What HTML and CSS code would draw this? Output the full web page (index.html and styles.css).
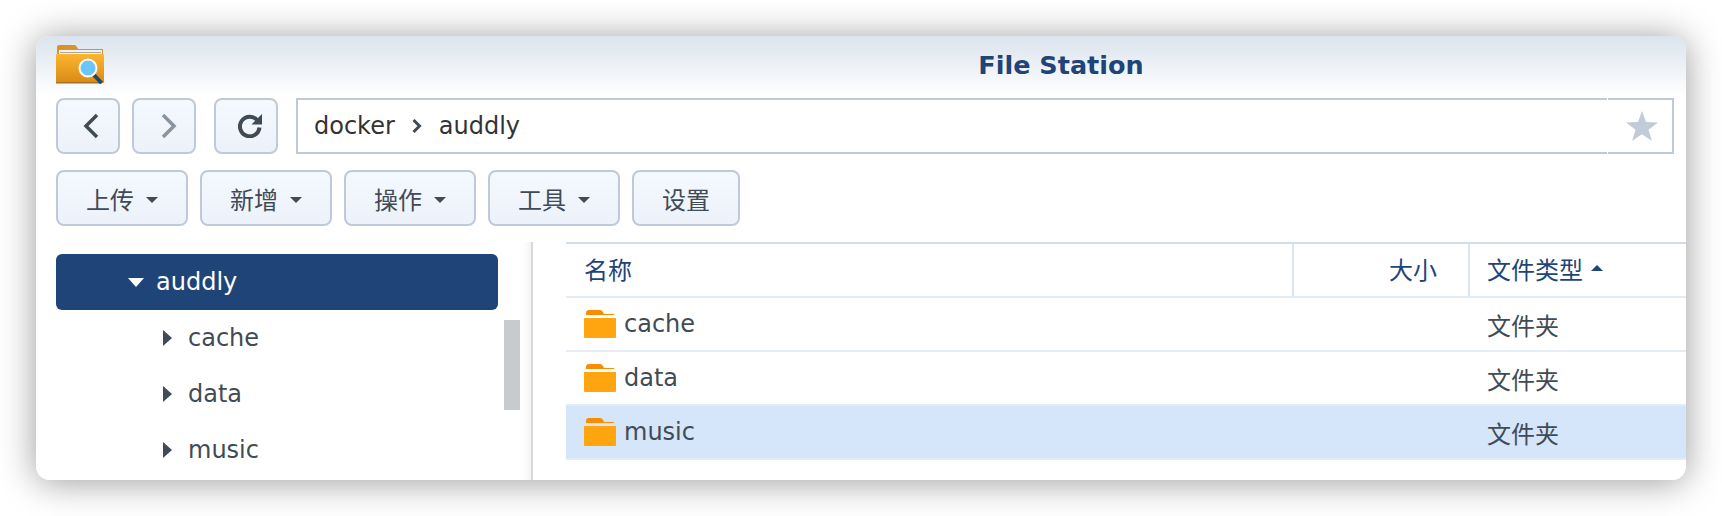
FILE: index.html
```html
<!DOCTYPE html>
<html lang="en">
<head>
    <meta charset="UTF-8">
    <meta name="viewport" content="width=device-width, initial-scale=1.0">
    <title>File Station</title>
    <link rel="stylesheet" href="styles.css">
</head>
<body>
    <div class="window">
        <div class="titlebar">
            <svg class="logo" width="48" height="42" viewBox="0 0 48 42">
                <defs>
                    <linearGradient id="folderFront" x1="0" y1="0" x2="0" y2="1">
                        <stop offset="0" stop-color="#fdb52f"/>
                        <stop offset="1" stop-color="#d88a16"/>
                    </linearGradient>
                </defs>
                <path d="M1 3 Q1 1 3 1 H18 Q20 1 21 3 L22 5 H47 V14 H1 Z" fill="#d9932a"/>
                <rect x="3" y="6" width="43" height="6" fill="#f1f1ee"/>
                <rect x="4" y="8" width="41" height="1" fill="#a9a9a4"/>
                <rect x="0" y="10" width="48" height="29" rx="1" fill="url(#folderFront)"/>
                <rect x="0" y="38" width="46" height="1.5" fill="#a8701c"/>
                <line x1="38" y1="31" x2="45.500" y2="39" stroke="#174a78" stroke-width="4"/>
                <circle cx="32" cy="24" r="8.500" fill="#6cc5fc" stroke="#fbfbf6" stroke-width="2"/>
            </svg>
            <div class="title">File Station</div>
        </div>

        <div class="navbar">
            <button class="btn btn-nav btn-back">
                <svg width="16" height="26" viewBox="0 0 16 26"><path d="M14 2 L3 13 L14 24" fill="none" stroke="#414b55" stroke-width="3.500"/></svg>
            </button>
            <button class="btn btn-nav btn-forward">
                <svg width="16" height="26" viewBox="0 0 16 26"><path d="M2 2 L13 13 L2 24" fill="none" stroke="#8a949f" stroke-width="3.500"/></svg>
            </button>
            <button class="btn btn-nav btn-refresh">
                <svg width="24" height="24" viewBox="0 0 24 24">
                    <path d="M19.500 6.500 A9.800 9.800 0 1 0 21.500 13.500" fill="none" stroke="#414b55" stroke-width="4"/>
                    <path d="M24 0 V10.500 H13.500 Z" fill="#414b55"/>
                </svg>
            </button>
            <div class="pathbar">
                <div class="path">
                    <span>docker</span>
                    <svg width="10" height="14" viewBox="0 0 10 14"><path d="M1.500 1 L7.500 7 L1.500 13" fill="none" stroke="#414b55" stroke-width="3"/></svg>
                    <span>auddly</span>
                </div>
                <div class="fav">
                    <svg width="32" height="30" viewBox="0 0 32 30"><path d="M16 0 L20 11 L32 11.500 L22.500 18.800 L26 30 L16 23.300 L6 30 L9.500 18.800 L0 11.500 L12 11 Z" fill="#c2ccd9"/></svg>
                </div>
            </div>
        </div>

        <div class="toolbar">
            <button class="btn btn-menu">上传<span class="caret"></span></button>
            <button class="btn btn-menu">新增<span class="caret"></span></button>
            <button class="btn btn-menu">操作<span class="caret"></span></button>
            <button class="btn btn-menu">工具<span class="caret"></span></button>
            <button class="btn btn-plain">设置</button>
        </div>

        <div class="main">
            <div class="tree">
                <div class="tree-row selected"><span class="arrow-down"></span>auddly</div>
                <div class="tree-row child"><span class="arrow-right"></span>cache</div>
                <div class="tree-row child"><span class="arrow-right"></span>data</div>
                <div class="tree-row child"><span class="arrow-right"></span>music</div>
                <div class="scrollbar"></div>
            </div>

            <div class="list">
                <div class="list-head">
                    <div class="cell">名称</div>
                    <div class="cell cell-size">大小</div>
                    <div class="cell cell-type">文件类型<span class="sort-up"></span></div>
                </div>
                <div class="list-row">
                    <div class="cell">
                        <svg class="folder" width="32" height="28" viewBox="0 0 32 28"><path d="M2 3 Q2 0 5 0 H16 Q18 0 19 2 L20 4 H30 V5 H2 Z" fill="#fb8c00"/><path d="M0 8 H32 V27 Q32 28 31 28 H1 Q0 28 0 27 Z" fill="#ffa50f"/></svg>
                        cache
                    </div>
                    <div class="cell"></div>
                    <div class="cell cell-type">文件夹</div>
                </div>
                <div class="list-row">
                    <div class="cell">
                        <svg class="folder" width="32" height="28" viewBox="0 0 32 28"><path d="M2 3 Q2 0 5 0 H16 Q18 0 19 2 L20 4 H30 V5 H2 Z" fill="#fb8c00"/><path d="M0 8 H32 V27 Q32 28 31 28 H1 Q0 28 0 27 Z" fill="#ffa50f"/></svg>
                        data
                    </div>
                    <div class="cell"></div>
                    <div class="cell cell-type">文件夹</div>
                </div>
                <div class="list-row active">
                    <div class="cell">
                        <svg class="folder" width="32" height="28" viewBox="0 0 32 28"><path d="M2 3 Q2 0 5 0 H16 Q18 0 19 2 L20 4 H30 V5 H2 Z" fill="#fb8c00"/><path d="M0 8 H32 V27 Q32 28 31 28 H1 Q0 28 0 27 Z" fill="#ffa50f"/></svg>
                        music
                    </div>
                    <div class="cell"></div>
                    <div class="cell cell-type">文件夹</div>
                </div>
            </div>
        </div>
    </div>
</body>
</html>
```

FILE: styles.css
```css
html, body {
    margin: 0;
    height: 516px;
    overflow: hidden;
    background-color: #fff;
}
body {
    padding: 36px;
    box-sizing: border-box;
    font-family: "DejaVu Sans", "Noto Sans CJK SC", sans-serif;
    font-size: 24px;
    color: #414b55;
}
.window {
    width: 1650px;
    height: 444px;
    background: linear-gradient(#dbe3ed 0, #fff 60px);
    border-radius: 14px;
    box-shadow: 0 2px 36px rgba(0, 0, 0, 0.4);
    overflow: hidden;
}

/* title bar */
.titlebar {
    display: flex;
    height: 62px;
    padding-left: 20px;
}
.logo {
    margin-top: 8px;
}
.title {
    flex: 1;
    padding: 14px 0 0 332px;
    text-align: center;
    font-size: 25.500px;
    font-weight: bold;
    color: #1f4477;
}

/* buttons */
.btn {
    height: 56px;
    box-sizing: border-box;
    margin: 0;
    padding: 0;
    display: flex;
    align-items: center;
    justify-content: center;
    border: 2px solid #bfcad8;
    border-radius: 8px;
    background: linear-gradient(#f4f8ff, #edf2fa);
    color: #414b55;
    font-family: "Noto Sans CJK SC", sans-serif;
    font-size: 24px;
}
.btn-nav {
    width: 64px;
}
.btn-back {
    padding-left: 6px;
}
.btn-forward {
    padding-left: 10px;
}
.btn-refresh {
    margin-left: 6px;
    padding-left: 8px;
}
.btn-menu {
    width: 132px;
    gap: 12px;
}
.btn-plain {
    width: 108px;
}
.caret {
    width: 0;
    height: 0;
    margin-top: 3px;
    border-left: 6px solid transparent;
    border-right: 6px solid transparent;
    border-top: 6px solid #414b55;
}

/* nav row */
.navbar {
    display: flex;
    gap: 12px;
    padding: 0 12px 0 20px;
}
.pathbar {
    flex: 1;
    display: flex;
    gap: 1px;
    margin-left: 6px;
    height: 56px;
}
.path {
    flex: 1;
    display: flex;
    align-items: center;
    gap: 17px;
    padding-left: 16px;
    border: 2px solid #bfcad8;
    border-right: 0;
    color: #333;
    background-color: #fff;
}
.fav {
    width: 66px;
    display: flex;
    align-items: center;
    justify-content: center;
    padding-left: 4px;
    box-sizing: border-box;
    border: 2px solid #bfcad8;
    border-left: 0;
    background-color: #fff;
}

.toolbar {
    display: flex;
    gap: 12px;
    margin-top: 16px;
    padding-left: 20px;
}

/* main area */
.main {
    display: flex;
    height: 238px;
    margin-top: 16px;
    overflow: hidden;
}
.tree {
    position: relative;
    width: 497px;
    box-sizing: border-box;
    padding: 12px 0 0 20px;
    border-right: 2px solid #d6d8da;
    box-shadow: inset -10px 0 8px -8px #eceef0;
    flex-shrink: 0;
}
.tree-row {
    display: flex;
    align-items: center;
    width: 442px;
    height: 56px;
    box-sizing: border-box;
    padding-left: 72px;
    gap: 12px;
}
.tree-row.selected {
    background-color: #1f4477;
    color: #fff;
    border-radius: 6px;
}
.tree-row.child {
    padding-left: 107px;
    gap: 16px;
}
.arrow-down {
    width: 0;
    height: 0;
    border-left: 8px solid transparent;
    border-right: 8px solid transparent;
    border-top: 9px solid #fff;
}
.arrow-right {
    width: 0;
    height: 0;
    border-top: 8px solid transparent;
    border-bottom: 8px solid transparent;
    border-left: 9px solid #414b55;
}
.scrollbar {
    position: absolute;
    left: 468px;
    top: 78px;
    width: 16px;
    height: 90px;
    background-color: #c8cbce;
}

/* file list */
.list {
    flex: 1;
    margin-left: 33px;
    min-width: 0;
}
.list-head, .list-row {
    display: grid;
    grid-template-columns: 726px 176px 1fr;
    box-sizing: border-box;
}
.list-head {
    height: 56px;
    border-top: 2px solid #d2dce8;
    border-bottom: 2px solid #e3ebf3;
    color: #1f4477;
    font-family: "Noto Sans CJK SC", sans-serif;
}
.list-head .cell {
    padding-bottom: 4px;
}
.list-head .cell + .cell {
    border-left: 2px solid #dce6f1;
}
.list-row {
    height: 54px;
    border-bottom: 2px solid #e6ecf3;
}
.list-row.active {
    background-color: #d5e5fa;
}
.cell {
    display: flex;
    align-items: center;
    padding-left: 18px;
    min-width: 0;
    box-sizing: border-box;
}
.folder {
    margin-right: 8px;
}
.cell-size {
    justify-content: flex-end;
    padding-right: 31px;
}
.cell-type {
    padding-left: 17px;
    font-family: "Noto Sans CJK SC", sans-serif;
}
.list-row .cell-type {
    padding-left: 19px;
}
.sort-up {
    width: 0;
    height: 0;
    margin-left: 8px;
    border-left: 6px solid transparent;
    border-right: 6px solid transparent;
    border-bottom: 6px solid #1f4477;
}
```
